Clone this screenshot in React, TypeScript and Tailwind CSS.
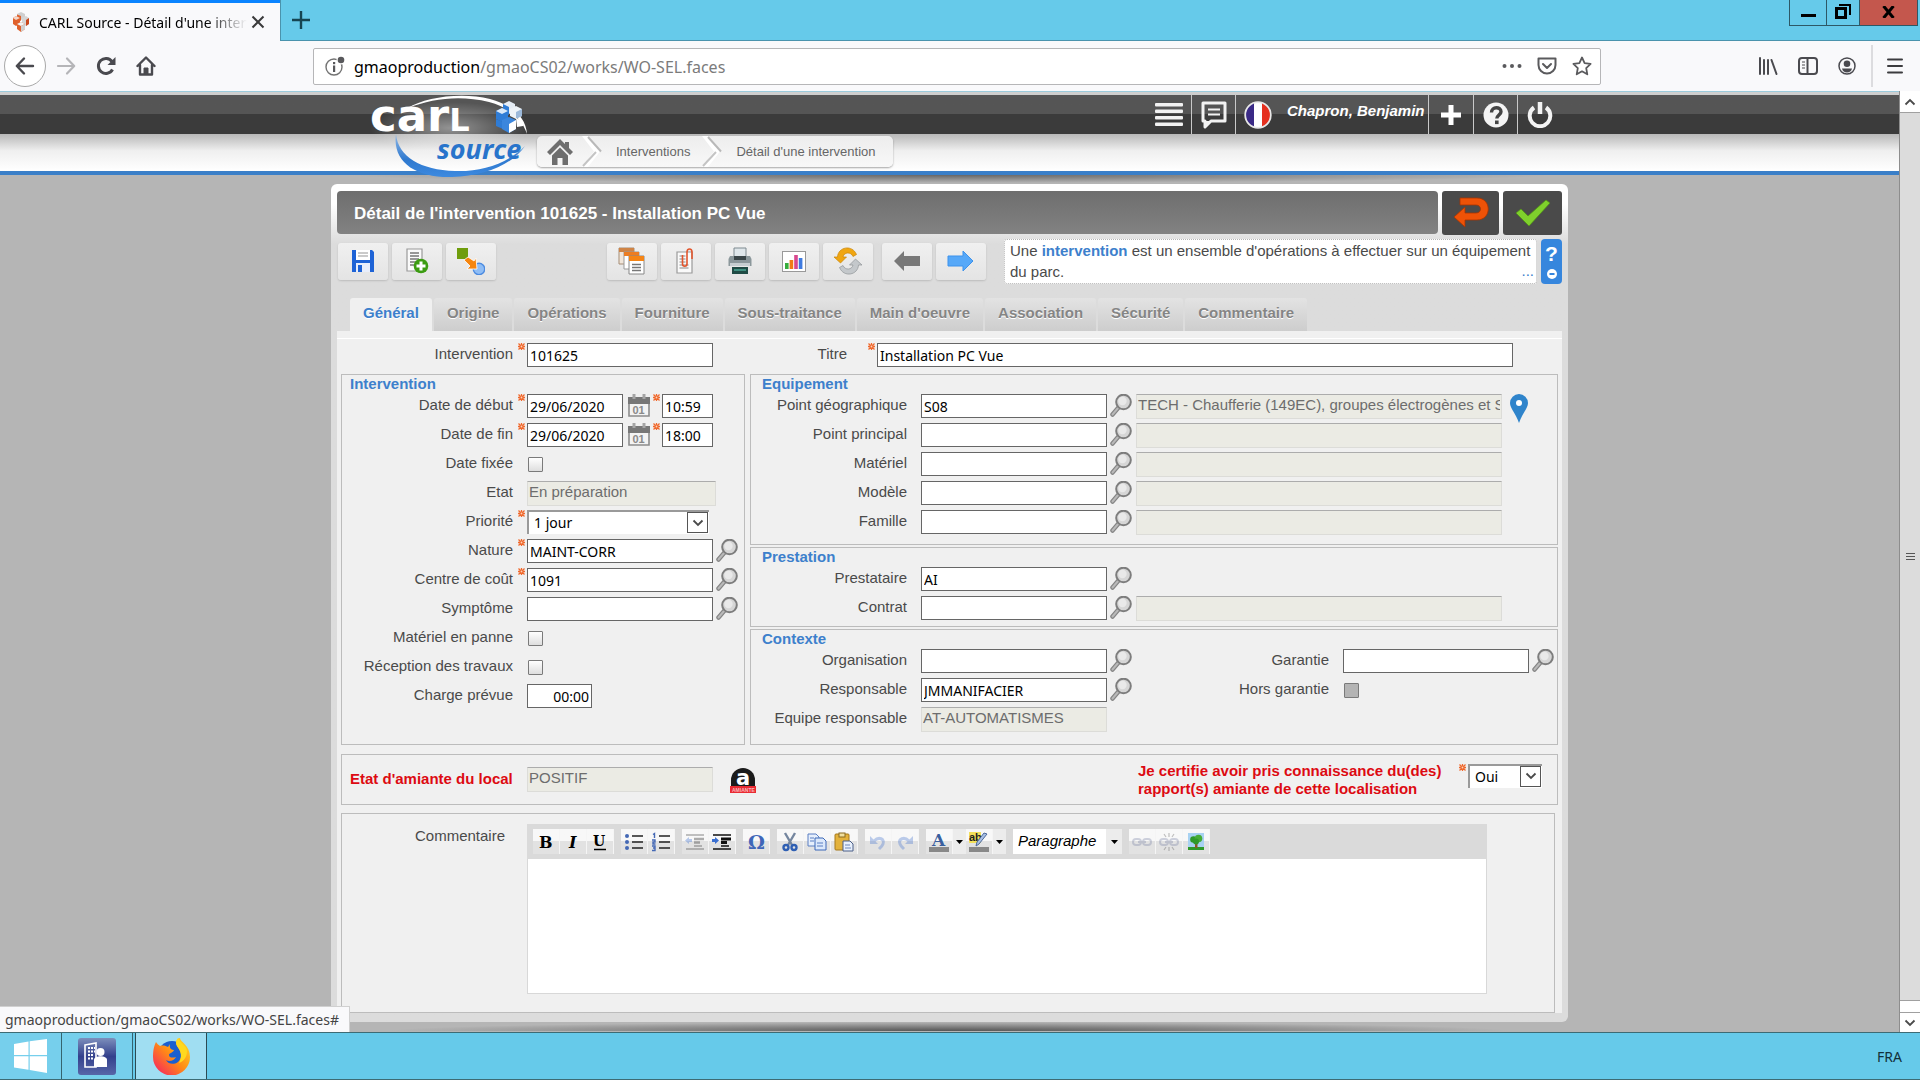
import React, { useState } from 'react';
import clsx from 'clsx';

type IconProps = { className?: string };

/* ---------- browser icons ---------- */

const FaviconIcon = () => (
  <svg className="h-5 w-[18px]" viewBox="0 0 18 20">
    <path d="M9 0l4 2v4l-4 2-4-2V2z" fill="#cfcfcf" />
    <path d="M9 4v5l-4-2V2.500z" fill="#e0612c" />
    <path d="M4 4l4 2v6l-4 2-3-2V6z" fill="#e0612c" />
    <path d="M4 4l4 2-4 2-3-2z" fill="#f4d8cb" />
    <path d="M14 4l3 2v6l-3 2-4-2V6z" fill="#d5d5d5" />
    <path d="M14 8l3-2v6l-3 2z" fill="#c9471c" />
    <path d="M9 10l4 2v5l-4 3-4-3v-5z" fill="#e0612c" />
    <path d="M9 10l4 2-4 2-4-2z" fill="#f4f4f4" />
    <path d="M9 14l4-2v5l-4 3z" fill="#d0d0d0" />
  </svg>
);

const ArrowLeftIcon = () => (
  <svg className="h-5 w-5" viewBox="0 0 20 20" fill="none" stroke="#4a4a4f" strokeWidth="2.4" strokeLinecap="round" strokeLinejoin="round">
    <path d="M18 10H2M9 2.500L1.800 10 9 17.500" />
  </svg>
);

const ArrowRightIcon = () => (
  <svg className="h-5 w-5" viewBox="0 0 20 20" fill="none" stroke="#b5b5b8" strokeWidth="2.200" strokeLinecap="round" strokeLinejoin="round">
    <path d="M2 10h16M11 2.500L18.200 10 11 17.500" />
  </svg>
);

const ReloadIcon = () => (
  <svg className="h-5 w-5" viewBox="0 0 20 20" fill="none" stroke="#4a4a4f" strokeWidth="3">
    <path d="M16.500 13.500A7.500 7.500 0 1 1 16 5.500" />
    <path d="M19.500 1v8h-8z" fill="#4a4a4f" stroke="none" />
  </svg>
);

const BrowserHomeIcon = () => (
  <svg className="h-5 w-5" viewBox="0 0 20 20" fill="none" stroke="#4a4a4f" strokeWidth="2.4" strokeLinejoin="round" strokeLinecap="round">
    <path d="M1.500 10L10 1.500l8.500 8.500M4 9v9.500h12V9" />
    <path d="M8 18v-6h4v6z" fill="#4a4a4f" strokeWidth="1" />
  </svg>
);

const InfoIcon = () => (
  <svg className="h-5 w-5" viewBox="0 0 20 20">
    <circle cx="9" cy="11" r="8" fill="none" stroke="#737373" strokeWidth="1.400" />
    <circle cx="16" cy="4" r="4.500" fill="#fff" />
    <circle cx="16" cy="4" r="3.300" fill="#58585b" />
    <rect x="8" y="9.500" width="2.200" height="6.500" fill="#58585b" />
    <rect x="8" y="6" width="2.200" height="2.200" fill="#58585b" />
  </svg>
);

const PocketIcon = () => (
  <svg className="h-5 w-5" viewBox="0 0 20 20" fill="none" stroke="#5a5a5d" strokeWidth="2" strokeLinecap="round" strokeLinejoin="round">
    <path d="M1.500 2.500h17v6.500a8.500 8.500 0 0 1-17 0z" />
    <path d="M6 8l4 4 4-4" />
  </svg>
);

const StarIcon = () => (
  <svg className="h-[22px] w-5" viewBox="0 0 20 20" fill="none" stroke="#5a5a5d" strokeWidth="1.800" strokeLinejoin="round">
    <path d="M10 1.500l2.600 5.600 6 .8-4.400 4.200 1.100 6.200-5.300-3-5.300 3 1.100-6.200L1.400 7.900l6-.8z" />
  </svg>
);

const LibraryIcon = () => (
  <svg className="h-[18px] w-5" viewBox="0 0 20 18" stroke="#4a4a4f" strokeWidth="2" strokeLinecap="round">
    <path d="M2 1v16M6 3v14M10 3v14M13.500 3l5 14" />
  </svg>
);

const SidebarIcon = () => (
  <svg className="h-[18px] w-5" viewBox="0 0 20 18" fill="none" stroke="#4a4a4f" strokeWidth="2">
    <rect x="1" y="1" width="18" height="16" rx="3" />
    <path d="M9.500 1v16" />
    <path d="M4 5h3M4 8h3M4 11h3" strokeWidth="1.200" />
  </svg>
);

const AccountIcon = () => (
  <svg className="h-[18px] w-[18px]" viewBox="0 0 18 18">
    <circle cx="9" cy="9" r="8" fill="none" stroke="#4a4a4f" strokeWidth="1.500" />
    <circle cx="9" cy="6.800" r="3.300" fill="#4a4a4f" />
    <path d="M4 11.500h10c-.5 2.500-2.500 4-5 4s-4.500-1.500-5-4z" fill="#4a4a4f" />
  </svg>
);

/* ---------- application header icons ---------- */

const CarlLogo = () => (
  <svg className="h-[90px] w-[164px]" viewBox="368 91 164 90">
    <defs>
      <linearGradient id="swoosh" x1="0" y1="0" x2="0" y2="1">
        <stop offset="0" stopColor="#8fb8e6" />
        <stop offset="0.6" stopColor="#2f79cf" />
        <stop offset="1" stopColor="#3d8ae0" />
      </linearGradient>
      <radialGradient id="glow">
        <stop offset="0" stopColor="#fff" stopOpacity="0.45" />
        <stop offset="1" stopColor="#fff" stopOpacity="0" />
      </radialGradient>
    </defs>
    <ellipse cx="450" cy="128" rx="80" ry="26" fill="url(#glow)" />
    <path d="M408 108C425 97 462 92 490 99c22 6 36 18 37 35-5-15-18-27-38-32-28-7-56-4-81 6z" fill="#fff" />
    <path d="M396 134c-4 28 20 44 56 43 32-1 60-12 73-31-18 18-44 26-70 25-34-1-57-14-59-37z" fill="url(#swoosh)" />
    <text x="370" y="131" fill="#fff" fontFamily="DejaVu Sans" fontWeight="700" fontSize="45">
      car<tspan fontSize="32">L</tspan>
    </text>
    <text x="437" y="159" fill="#2874cb" fontFamily="Open Sans" fontWeight="700" fontStyle="italic" fontSize="27">source</text>
    <path d="M509 101l6 3v7l-6 3-6-3v-7z" fill="#e6edf5" />
    <path d="M509 107v8l-6-3v-8z" fill="#2f7cd6" />
    <path d="M502 108l6 3v8l-6 3-6-3v-8z" fill="#2f7cd6" />
    <path d="M502 108l6 3-6 3-6-3z" fill="#d9e8f8" />
    <path d="M516 106l6 3v7l-6 3-6-3v-7z" fill="#eef3f8" />
    <path d="M516 112l6-3v7l-6 3z" fill="#9cb9da" />
    <path d="M496 119l7 3v7l-7-3z" fill="#2f7cd6" />
    <path d="M509 117l7 3v9l-7 4-7-4v-9z" fill="#3b86dd" />
    <path d="M509 124l7-4v9l-7 4z" fill="#fff" />
    <path d="M516 118l7 3v5l-6 1z" fill="#fff" />
  </svg>
);

const MenuLinesIcon = () => (
  <svg className="h-6 w-7" viewBox="0 0 28 24" fill="#f2f2f2">
    <rect width="28" height="3.500" y="0" rx="1" />
    <rect width="28" height="3.500" y="6.500" rx="1" />
    <rect width="28" height="3.500" y="13" rx="1" />
    <rect width="28" height="3.500" y="19.500" rx="1" />
  </svg>
);

const ChatIcon = () => (
  <svg className="h-7 w-7" viewBox="0 0 28 28">
    <path d="M3 2h22v18H11l-6 6v-6H3z" fill="none" stroke="#f2f2f2" strokeWidth="3" strokeLinejoin="round" />
    <path d="M4 20h8l-7 7z" fill="#f2f2f2" />
    <path d="M8 8.500h12M8 13.500h12" stroke="#f2f2f2" strokeWidth="2.200" />
  </svg>
);

const FlagIcon = () => (
  <svg className="h-7 w-7" viewBox="0 0 28 28">
    <clipPath id="flag"><circle cx="14" cy="14" r="12.500" /></clipPath>
    <g clipPath="url(#flag)">
      <rect width="10" height="28" fill="#3a2a86" />
      <rect x="10" width="8" height="28" fill="#fff" />
      <rect x="18" width="10" height="28" fill="#e5301f" />
    </g>
    <circle cx="14" cy="14" r="12.800" fill="none" stroke="#e8e8e8" strokeWidth="1.800" />
  </svg>
);

const PlusIcon = () => (
  <svg className="h-5 w-5" viewBox="0 0 20 20" fill="#fff">
    <path d="M7.500 0h5v7.500H20v5h-7.500V20h-5v-7.500H0v-5h7.500z" />
  </svg>
);

const QuestionIcon = () => (
  <svg className="h-[26px] w-[26px]" viewBox="0 0 26 26">
    <circle cx="13" cy="13" r="12.500" fill="#f4f4f4" />
    <path d="M8.500 10.500c0-6.500 9.500-6 9.500-.8 0 3-4.200 3.600-4.200 6.800" fill="none" stroke="#444" strokeWidth="3.400" />
    <rect x="12" y="18.500" width="3.600" height="3.600" fill="#444" />
  </svg>
);

const PowerIcon = () => (
  <svg className="h-[26px] w-[26px]" viewBox="0 0 26 26" fill="none" stroke="#f4f4f4" strokeWidth="4">
    <path d="M7 5.500a10.300 10.300 0 1 0 12 0" />
    <path d="M13 0v12" strokeWidth="4.500" />
  </svg>
);

const CrumbHomeIcon = () => (
  <svg className="h-[26px] w-[26px]" viewBox="0 0 26 26" fill="#6e6e6e">
    <path d="M13 0L0 13l3 3L13 6l10 10 3-3-4-4V3h-4v2z" />
    <path d="M13 8.500L5 16.500V26h5.500v-7h5v7H21v-9.500z" />
  </svg>
);

const CrumbSeparator = () => (
  <svg className="h-[31px] w-6 shrink-0" viewBox="0 0 24 31" fill="none">
    <path d="M1 0h6l12 15.500L7 31H1l12-15.500z" fill="#fff" />
    <path d="M7 1l13 14.500" stroke="#b9b9b9" strokeWidth="2" />
    <path d="M15 16L2 30" stroke="#c4c4c4" strokeWidth="2" />
  </svg>
);

/* ---------- toolbar icons ---------- */

const SaveIcon = () => (
  <svg className="h-6 w-6" viewBox="0 0 24 24">
    <path d="M1 1h20l2 2v20H1z" fill="#1e63d6" />
    <rect x="5" y="1" width="14" height="10" fill="#fff" />
    <path d="M7 4h10M7 7h10" stroke="#b9b9b9" strokeWidth="1.400" />
    <rect x="5" y="14" width="14" height="9" fill="#e8eefb" />
    <rect x="7" y="16" width="4" height="7" fill="#1e63d6" />
  </svg>
);

const AddDocIcon = () => (
  <svg className="h-[26px] w-6" viewBox="0 0 24 26">
    <path d="M2 1h15v22H2z" fill="#fafafa" stroke="#9a9a9a" strokeWidth="1.200" />
    <path d="M5 5h9M5 8h9M5 11h9M5 14h7M5 17h6" stroke="#777" strokeWidth="1.300" />
    <circle cx="16" cy="18" r="7.300" fill="#3c9c12" />
    <path d="M16 13.500v9M11.500 18h9" stroke="#fff" strokeWidth="3" />
  </svg>
);

const WorkflowIcon = () => (
  <svg className="h-7 w-7" viewBox="0 0 28 28">
    <rect x="0" y="1" width="11" height="11" fill="#6f9d0c" />
    <circle cx="22" cy="22" r="5.700" fill="#8fbdf5" stroke="#4c8be0" strokeWidth="1.400" />
    <path d="M7 13l4-3 6 4 2-3 1 11H10l3-3z" fill="#f5850f" stroke="#fff" strokeWidth="0.800" />
  </svg>
);

const CopiesIcon = () => (
  <svg className="h-7 w-7" viewBox="0 0 28 28">
    <path d="M1 1h15v16H1z" fill="#f1e6da" stroke="#a58d76" />
    <path d="M1 1h15v4H1z" fill="#cf8446" />
    <path d="M6 5h15v17H6z" fill="#fff" stroke="#999" />
    <path d="M6 5h15v4H6z" fill="#ec7d22" />
    <path d="M11 9h15v18H11z" fill="#fff" stroke="#888" />
    <path d="M11 9h15v5H11z" fill="#f58414" />
    <path d="M14 17.500h9M14 20.500h9M14 23.500h9" stroke="#777" strokeWidth="1.400" />
  </svg>
);

const AttachIcon = () => (
  <svg className="h-[26px] w-[22px]" viewBox="0 0 22 26">
    <path d="M2 4h15v21H2z" fill="#fafafa" stroke="#9a9a9a" strokeWidth="1.200" />
    <path d="M4.500 8h6M4.500 11h6M4.500 14h6M4.500 17h9M4.500 20h9" stroke="#888" strokeWidth="1.200" />
    <path d="M10.500 7v9c0 3 4.500 3 4.500 0V4c0-4 5-4 5 0v7" fill="none" stroke="#e2562e" strokeWidth="1.600" transform="translate(-3 0)" />
  </svg>
);

const PrintIcon = () => (
  <svg className="h-7 w-6" viewBox="0 0 24 28">
    <path d="M6 1h12v10H6z" fill="#dfe6ea" stroke="#7f8a90" />
    <path d="M2 9h20l1.500 3v7H.5v-7z" fill="#8b979b" />
    <path d="M6 9h12v4H6z" fill="#3a4548" />
    <path d="M2 16h20v3H2z" fill="#c6ced1" />
    <path d="M4 20h16v7H4z" fill="#1f4b45" />
    <path d="M6 22h12v2H6z" fill="#3f8f80" />
  </svg>
);

const ChartIcon = () => (
  <svg className="h-6 w-6" viewBox="0 0 24 24">
    <rect x="0.500" y="2.500" width="23" height="20" fill="#fff" stroke="#999" />
    <rect x="3" y="14" width="3.600" height="6" fill="#37ad3c" />
    <rect x="7.600" y="11" width="3.600" height="9" fill="#f07c16" />
    <rect x="12.200" y="6" width="3.600" height="14" fill="#d8488e" />
    <rect x="16.800" y="9" width="3.600" height="11" fill="#3f7be0" />
  </svg>
);

const RefreshIcon = () => (
  <svg className="h-7 w-7" viewBox="0 0 28 28">
    <path d="M0 10l6.500 6 6-6H9c1-5 8-5.500 10-.5l3.500-2C18-3 4 0 3.500 10z" fill="#f0a611" stroke="#c98508" strokeWidth="0.700" />
    <path d="M28 18l-6.500-6-6 6H19c-1 5-8 5.500-10 .5l-3.500 2C10 31 24 28 24.500 18z" fill="#c4c8cb" stroke="#8f9497" strokeWidth="0.700" />
  </svg>
);

const PrevIcon = () => (
  <svg className="h-[22px] w-7" viewBox="0 0 28 22">
    <path d="M11 1v5h16v10H11v5L1 11z" fill="#787878" />
  </svg>
);

const NextIcon = () => (
  <svg className="h-[22px] w-7" viewBox="0 0 28 22">
    <path d="M16 1v5H1v10h15v5l10-10z" fill="#56a8f8" stroke="#3d92ec" strokeWidth="1" />
  </svg>
);

const BackIcon = () => (
  <svg className="h-8 w-9" viewBox="0 0 36 32">
    <path d="M7 1h17c15 0 15 22 0 22H12v7L1 20l11-10v6h11c6 0 6-8 0-8H7z" fill="#ee5207" stroke="#a83400" strokeWidth="0.800" />
  </svg>
);

const ValidateIcon = () => (
  <svg className="h-7 w-9" viewBox="0 0 36 28">
    <path d="M1 14l5-4 7 7L31 1l4 3-21 23z" fill="#7fd02c" stroke="#4f9412" strokeWidth="0.700" />
  </svg>
);

/* ---------- field icons ---------- */

const Required = () => (
  <svg className="h-[7px] w-[7px]" viewBox="0 0 7 7">
    <path d="M3.500 0v7M0 3.500h7M.5.500l6 6M6.500.500l-6 6" stroke="#f0682c" strokeWidth="1.300" />
    <circle cx="3.500" cy="3.500" r="0.900" fill="#fbd3bd" />
  </svg>
);

const MagnifierIcon = () => (
  <svg className="h-6 w-[22px]" viewBox="0 0 22 24">
    <path d="M8.500 13.500L2.500 20.500" stroke="#858585" strokeWidth="4.500" strokeLinecap="round" />
    <path d="M8.500 13.500L2.500 20.500" stroke="#b9b9b9" strokeWidth="2" strokeLinecap="round" />
    <circle cx="13.500" cy="8" r="7.300" fill="#d6d6d6" stroke="#7d7d7d" strokeWidth="2" />
    <circle cx="12.500" cy="7" r="4.200" fill="#e9e9e9" />
  </svg>
);

const CalendarIcon = () => (
  <svg className="h-6 w-[22px]" viewBox="0 0 22 24">
    <path d="M1 4h20v18H1z" fill="#f3f3f3" stroke="#8c8c8c" strokeWidth="1.600" />
    <path d="M0 3h22v7H0z" fill="#777" />
    <rect x="4.500" y="0" width="3" height="5" fill="#a5a5a5" />
    <rect x="14.500" y="0" width="3" height="5" fill="#a5a5a5" />
    <text x="4.500" y="20" fontFamily="Liberation Sans" fontWeight="700" fontSize="11" fill="#8a8a8a">01</text>
  </svg>
);

const PinIcon = () => (
  <svg className="h-[29px] w-[18px]" viewBox="0 0 18 29">
    <path d="M9 0a9 9 0 0 1 9 9c0 5-6 11-9 20C6 20 0 14 0 9a9 9 0 0 1 9-9z" fill="#2f84cb" />
    <circle cx="9" cy="9" r="3" fill="#fff" />
  </svg>
);

const AsbestosIcon = () => (
  <svg className="h-[26px] w-[26px]" viewBox="0 0 26 26">
    <path d="M1 19v-6a12 12 0 0 1 24 0v6z" fill="#1b1b1b" />
    <text x="6" y="18" fontFamily="DejaVu Sans" fontWeight="700" fontSize="21" fill="#fff">a</text>
    <rect x="0" y="19" width="26" height="7" fill="#ea2a32" />
    <text x="2" y="25" fontFamily="Liberation Sans" fontWeight="700" fontSize="5" fill="#f9b7b9">AMIANTE</text>
  </svg>
);

const Chevron = ({ className }: IconProps) => (
  <svg className={clsx('h-2 w-3', className)} viewBox="0 0 12 8" fill="none" stroke="#4a4a4a" strokeWidth="1.800">
    <path d="M1.500 1.500L6 6l4.500-4.500" />
  </svg>
);

/* ---------- form pieces ---------- */

type FieldProps = {
  id: string;
  label: string;
  labelClass?: string;
  required?: boolean;
  children?: React.ReactNode;
};

const Field = ({ id, label, labelClass = 'w-[171px]', required, children }: FieldProps) => (
  <div className="flex h-[29px] items-start">
    <label htmlFor={id} className={clsx('h-6 shrink-0 text-right text-[15px] leading-[22px] text-[#4a4a4a]', labelClass)}>
      {label}
    </label>
    <span className="flex w-[14px] shrink-0 pl-[5px]">{required && <Required />}</span>
    {children}
  </div>
);

type TextInputProps = {
  id: string;
  value?: string;
  className?: string;
  label?: string;
};

const TextInput = ({ id, value = '', className = 'w-[186px]', label }: TextInputProps) => {
  const [text, setText] = useState(value);
  return (
    <input
      id={id}
      type="text"
      aria-label={label}
      value={text}
      onChange={e => setText(e.target.value)}
      className={clsx("h-6 border border-[#666] bg-white px-[2px] font-['Noto_Sans',sans-serif] text-sm leading-5 text-black outline-none", className)}
    />
  );
};

const ReadOnly = ({ id, value = '', className = 'w-[186px]', label }: TextInputProps) => (
  <input
    id={id}
    type="text"
    readOnly
    aria-label={label}
    value={value}
    className={clsx('h-[25px] min-w-0 border border-[#dcdcd8] border-t-[#acacac] bg-[#ebebe4] px-px pb-[5px] text-[15px] text-[#6d6d6d] outline-none', className)}
  />
);

const CheckBox = ({ id, gray }: { id: string; gray?: boolean }) => (
  <input
    id={id}
    type="checkbox"
    disabled={gray}
    className={clsx(
      'mt-[5px] ml-px h-[15px] w-[15px] appearance-none rounded-[1px] border border-[#7a7a7a]',
      gray ? 'bg-[#b4b4b4]' : 'bg-linear-to-b from-white to-[#dedede]'
    )}
  />
);

const LookupButton = ({ name }: { name: string }) => (
  <button type="button" aria-label={`Rechercher ${name}`} className="ml-[3px] shrink-0">
    <MagnifierIcon />
  </button>
);

const Lookup = ({ id, value, name }: { id: string; value?: string; name: string }) => (
  <>
    <TextInput id={id} value={value} />
    <LookupButton name={name} />
  </>
);

const SelectBox = ({ id, className, options }: { id: string; className: string; options: string[] }) => (
  <span className={clsx('relative h-6', className)}>
    <select
      id={id}
      className="h-6 w-full appearance-none border-t-2 border-l-2 border-[#9a9a9a] bg-white pl-[5px] font-['Noto_Sans',sans-serif] text-sm leading-5 text-black outline-none"
    >
      {options.map(o => <option key={o}>{o}</option>)}
    </select>
    <span className="pointer-events-none absolute top-[2px] right-px flex h-[21px] w-[21px] items-center justify-center border border-[#555] bg-white">
      <Chevron />
    </span>
  </span>
);

const DateField = ({ id, label, date, time }: { id: string; label: string; date: string; time: string }) => (
  <Field id={id} label={label} required>
    <TextInput id={id} value={date} className="w-24" />
    <button type="button" aria-label="Calendrier" className="ml-[5px]"><CalendarIcon /></button>
    <span className="flex w-3 pl-[3px]"><Required /></span>
    <TextInput id={`${id}-heure`} value={time} label="Heure" className="w-[51px]" />
  </Field>
);

const Group = ({ title, titleClass, className, children }: { title: string; titleClass: string; className?: string; children: React.ReactNode }) => (
  <section className={clsx('border border-[#bcbcbc]', className)}>
    <h2 className={clsx('h-[19px] text-[15px] leading-[17px] font-bold text-[#3d80cc]', titleClass)}>{title}</h2>
    {children}
  </section>
);

const ToolButton = ({ name, children }: { name: string; children: React.ReactNode }) => (
  <button
    type="button"
    aria-label={name}
    className="flex h-[37px] w-[50px] items-center justify-center rounded-[3px] bg-linear-to-b from-[#f0f0f0] to-[#e4e4e4] shadow-[0_1px_2px_rgba(0,0,0,0.15)]"
  >
    {children}
  </button>
);

/* ---------- rich text editor ---------- */

const EditorButton = ({ name, faded, children }: { name: string; faded?: boolean; children: React.ReactNode }) => (
  <button
    type="button"
    aria-label={name}
    className="flex h-[25px] w-[27px] items-center justify-center border-r border-[#f5f5f5] bg-linear-to-b from-[#f8f8f8] from-50% to-[#e2e2e2] to-50%"
  >
    <svg className={clsx('h-5 w-5 overflow-visible', faded && 'opacity-35')} viewBox="0 0 20 20" fill="none">{children}</svg>
  </button>
);

const DropArrow = ({ name, className = 'w-[13px]' }: { name: string; className?: string }) => (
  <button type="button" aria-label={name} className={clsx('flex h-[25px] items-center justify-center bg-[#ececec]', className)}>
    <svg className="h-1 w-[7px]" viewBox="0 0 7 4"><path d="M0 0h7L3.500 4z" fill="#000" /></svg>
  </button>
);

const letter = { fontFamily: 'DejaVu Serif', fontWeight: 700 };

const Chain = () => (
  <g stroke="#7d86a8" strokeWidth="2">
    <rect x="1" y="7" width="8" height="6" rx="3" />
    <rect x="11" y="7" width="8" height="6" rx="3" />
    <path d="M6 10h8" />
  </g>
);

const EditorToolbar = () => (
  <div className="flex h-[35px] items-center gap-[7px] bg-[#dadada] px-[6px]">
    <div className="flex">
      <EditorButton name="Gras"><text x="3" y="16" fontSize="16" fill="#000" {...letter}>B</text></EditorButton>
      <EditorButton name="Italique"><text x="6" y="16" fontSize="16" fill="#000" fontStyle="italic" {...letter}>I</text></EditorButton>
      <EditorButton name="Souligné">
        <text x="3" y="14" fontSize="14" fill="#000" {...letter}>U</text>
        <path d="M4 17.500h12" stroke="#000" strokeWidth="1.500" />
      </EditorButton>
    </div>
    <div className="flex">
      <EditorButton name="Liste à puces">
        <path d="M8 4h11M8 10h11M8 16h11" stroke="#222" strokeWidth="1.500" />
        <g fill="#4468b5"><circle cx="3" cy="4" r="2" /><circle cx="3" cy="10" r="2" /><circle cx="3" cy="16" r="2" /></g>
      </EditorButton>
      <EditorButton name="Liste numérotée">
        <path d="M8 4h11M8 10h11M8 16h11" stroke="#222" strokeWidth="1.500" />
        <path d="M2 2.500l1.500-1v4.500M1 8h3v2H2v2h2.500M1 14h3v2H2h2v2.500H1" stroke="#4468b5" strokeWidth="1.400" />
      </EditorButton>
    </div>
    <div className="flex">
      <EditorButton name="Diminuer le retrait" faded>
        <path d="M1 3h18M1 17h18M9 14h8" stroke="#222" strokeWidth="1.300" />
        <path d="M9 7h10M9 10.500h6" stroke="#222" strokeWidth="2.500" />
        <path d="M0 8.500L4 5v2h3v3H4v2z" fill="#3a6fd0" />
      </EditorButton>
      <EditorButton name="Augmenter le retrait">
        <path d="M1 3h18M1 17h18M9 14h8" stroke="#111" strokeWidth="1.500" />
        <path d="M9 7h10M9 10.500h6" stroke="#111" strokeWidth="2.800" />
        <path d="M7 8.500L3 5v2H0v3h3v2z" fill="#3a6fd0" />
      </EditorButton>
    </div>
    <EditorButton name="Caractère spécial"><text x="2" y="17" fontSize="19" fill="#3f66b8" {...letter}>Ω</text></EditorButton>
    <div className="flex">
      <EditorButton name="Couper">
        <path d="M5 1l7 12M15 1L8 13" stroke="#75869f" strokeWidth="2.400" />
        <circle cx="6" cy="15.500" r="2.500" stroke="#2f5fb3" strokeWidth="2.400" />
        <circle cx="14" cy="15.500" r="2.500" stroke="#2f5fb3" strokeWidth="2.400" />
      </EditorButton>
      <EditorButton name="Copier">
        <path d="M1 2h8l3 3v9H1z" fill="#e6effc" stroke="#5b7fc2" />
        <path d="M8 6h8l3 3v9H8z" fill="#dbe8fb" stroke="#3d68b8" />
        <path d="M3 6h4M3 9h4M10 11h6M10 14h6" stroke="#5b7fc2" />
      </EditorButton>
      <EditorButton name="Coller">
        <rect x="1" y="2" width="14" height="16" rx="1" fill="#e3b23c" stroke="#a6781a" />
        <rect x="5" y="1" width="6" height="4" fill="#f0dfa0" stroke="#8a6a20" />
        <path d="M9 9h7l3 3v7H9z" fill="#e8f0fc" stroke="#4b5f88" />
        <path d="M11 13h5M11 16h6" stroke="#6d86b8" />
      </EditorButton>
    </div>
    <div className="flex">
      <EditorButton name="Annuler" faded>
        <path d="M6 9c5-5 11-2 9 3-.7 2-3 4-4 5" stroke="#4a77cf" strokeWidth="3" />
        <path d="M2 4v8h8z" fill="#4a77cf" />
      </EditorButton>
      <EditorButton name="Rétablir" faded>
        <path d="M14 9C9 4 3 7 5 12c.7 2 3 4 4 5" stroke="#4a77cf" strokeWidth="3" />
        <path d="M18 4v8h-8z" fill="#4a77cf" />
      </EditorButton>
    </div>
    <div className="flex">
      <EditorButton name="Couleur du texte">
        <text x="3" y="14" fontSize="17" fill="#3a5f9e" {...letter}>A</text>
        <rect x="0" y="15" width="20" height="5" fill="#888" />
      </EditorButton>
      <DropArrow name="Choisir la couleur" />
      <EditorButton name="Surlignage">
        <rect x="0" y="0" width="12" height="11" fill="#f2e05a" />
        <text x="0" y="9" fontSize="11" fontFamily="Liberation Sans" fontWeight="700" fill="#222">ab</text>
        <path d="M18 2l-8 10-3 2 1-4 7-9z" fill="#a9c0e4" stroke="#4c6899" />
        <rect x="0" y="15" width="20" height="5" fill="#888" />
      </EditorButton>
      <DropArrow name="Choisir le surlignage" />
    </div>
    <div className="relative flex">
      <select aria-label="Format" className="h-[25px] w-[93px] appearance-none bg-white pl-[5px] text-[15px] text-black italic outline-none">
        <option>Paragraphe</option>
      </select>
      <DropArrow name="Choisir le format" className="w-4" />
    </div>
    <div className="flex">
      <EditorButton name="Lien" faded><Chain /></EditorButton>
      <EditorButton name="Supprimer le lien" faded>
        <Chain />
        <path d="M10 1v4M5 2l2 3M15 2l-2 3M10 19v-4M5 18l2-3M15 18l-2-3" stroke="#555" strokeWidth="1.200" />
      </EditorButton>
      <EditorButton name="Image">
        <rect x="2" y="1" width="16" height="17" fill="#a8d2f2" />
        <rect x="2" y="15" width="16" height="3" fill="#2f9a2a" />
        <path d="M9 10h2.500v6H9z" fill="#8a5a26" />
        <circle cx="7.500" cy="7.500" r="3.300" fill="#2f9a2a" />
        <circle cx="12.500" cy="6.500" r="3.800" fill="#46ad35" />
        <circle cx="10" cy="9.500" r="3" fill="#2f9a2a" />
      </EditorButton>
    </div>
  </div>
);

/* ---------- page parts ---------- */

const BrowserChrome = () => (
  <header className="font-['Noto_Sans',sans-serif]">
    <div className="flex h-[41px] items-start bg-[#66caea]">
      <div className="flex h-[41px] w-[280px] items-center border-t-[3px] border-[#0a84ff] bg-[#f9f9fb] pl-3">
        <FaviconIcon />
        <span className="ml-[9px] w-[208px] overflow-hidden bg-linear-to-r from-black from-80% to-transparent bg-clip-text text-[14px] whitespace-nowrap text-transparent">
          CARL Source - Détail d'une intervention
        </span>
        <button type="button" aria-label="Fermer l'onglet" className="ml-1">
          <svg className="h-[14px] w-[14px]" viewBox="0 0 14 14" stroke="#3a3a3a" strokeWidth="2"><path d="M1.500 1.500l11 11M12.500 1.500l-11 11" /></svg>
        </button>
      </div>
      <div className="flex h-[41px] flex-1 items-start justify-between border-b border-l border-[#4a93ad]">
        <button type="button" aria-label="Nouvel onglet" className="mt-[11px] ml-[11px]">
          <svg className="h-[18px] w-[18px]" viewBox="0 0 18 18" stroke="#164552" strokeWidth="2.400"><path d="M9 0v18M0 9h18" /></svg>
        </button>
        <div className="mr-[2px] flex h-[26px] border-b border-l border-[#2d5866]">
          <button type="button" aria-label="Réduire" className="flex w-9 justify-center pt-[14px]">
            <span className="h-[3px] w-[15px] bg-black" />
          </button>
          <button type="button" aria-label="Restaurer" className="flex w-[33px] items-start justify-center border-l border-[#2d5866] pt-1">
            <svg className="h-[15px] w-4" viewBox="0 0 16 15" fill="none" stroke="#000"><path d="M1.500 4.500h9v9h-9z" strokeWidth="3" /><path d="M4 1h11v10" strokeWidth="2" /></svg>
          </button>
          <button type="button" aria-label="Fermer" className="flex w-[59px] items-start justify-center border-x border-[#2d5866] bg-[#c4574d] pt-[6px]">
            <svg className="h-3 w-[13px]" viewBox="0 0 13 12" stroke="#000" strokeWidth="3"><path d="M1.500 0l10 12M11.500 0l-10 12" /></svg>
          </button>
        </div>
      </div>
    </div>
    <div className="flex h-[50px] items-center bg-[#f9f9fb] pl-1">
      <button type="button" aria-label="Précédent" className="flex h-[42px] w-[42px] items-center justify-center rounded-full border border-[#a9a9a9] bg-white">
        <ArrowLeftIcon />
      </button>
      <button type="button" aria-label="Suivant" className="ml-[10px]"><ArrowRightIcon /></button>
      <button type="button" aria-label="Actualiser" className="ml-5"><ReloadIcon /></button>
      <button type="button" aria-label="Accueil" className="ml-5"><BrowserHomeIcon /></button>
      <div className="ml-[157px] flex h-[37px] flex-1 items-center rounded-[2px] border border-[#b6b6b8] bg-white pr-2 pl-[11px]">
        <InfoIcon />
        <a href="#" className="ml-[9px] flex-1 pt-[2px] text-[16px] text-[#7b7b7b]">
          <span className="text-black">gmaoproduction</span>/gmaoCS02/works/WO-SEL.faces
        </a>
        <button type="button" aria-label="Actions" className="mr-[15px]">
          <svg className="h-1 w-5" viewBox="0 0 20 4" fill="#5a5a5d"><circle cx="2.500" cy="2" r="2" /><circle cx="10" cy="2" r="2" /><circle cx="17.500" cy="2" r="2" /></svg>
        </button>
        <button type="button" aria-label="Pocket" className="mr-[15px]"><PocketIcon /></button>
        <button type="button" aria-label="Marque-page"><StarIcon /></button>
      </div>
      <div className="ml-[157px] flex items-center gap-5">
        <button type="button" aria-label="Bibliothèque"><LibraryIcon /></button>
        <button type="button" aria-label="Panneau latéral"><SidebarIcon /></button>
        <button type="button" aria-label="Compte"><AccountIcon /></button>
      </div>
      <button type="button" aria-label="Menu" className="ml-[15px] flex h-[42px] items-center border-l-2 border-[#dcdcdf] pr-[17px] pl-[14px]">
        <svg className="h-4 w-4" viewBox="0 0 16 16" stroke="#3c3c3f" strokeWidth="2" strokeLinecap="round"><path d="M1 1.500h14M1 8h14M1 14.500h14" /></svg>
      </button>
    </div>
  </header>
);

const cell = 'flex h-[39px] items-center justify-center border-l border-[#c9c9c9]';

const AppHeader = () => (
  <div className="relative">
    <div className="h-1 border-t border-[#9bcbdc] bg-[#cfcfcf]" />
    <div className="bg-linear-to-b from-[#555] from-50% to-[#3b3b3b] to-50%">
      <div className="mx-auto flex h-[39px] max-w-[1237px] items-center justify-end pr-[6px] text-white">
        <button type="button" aria-label="Menu principal" className="mr-2 flex"><MenuLinesIcon /></button>
        <button type="button" aria-label="Messages" className={clsx(cell, 'w-11')}><ChatIcon /></button>
        <button type="button" aria-label="Langue" className={clsx(cell, 'mr-2 w-11')}><FlagIcon /></button>
        <span className="w-[141px] pb-2 text-[15px] leading-5 font-bold whitespace-nowrap italic">Chapron, Benjamin</span>
        <button type="button" aria-label="Ajouter" className={clsx(cell, 'w-[45px]')}><PlusIcon /></button>
        <button type="button" aria-label="Aide" className={clsx(cell, 'w-11')}><QuestionIcon /></button>
        <button type="button" aria-label="Déconnexion" className={clsx(cell, 'w-[45px]')}><PowerIcon /></button>
      </div>
    </div>
    <div className="border-b-4 border-[#3a7fc8] bg-linear-to-b from-[#b8b8b8] via-[#efefef] via-45% to-white">
      <div className="mx-auto h-[37px] max-w-[1237px] pt-[2px] pl-[206px]">
        <nav className="flex h-[31px] w-fit items-center rounded-[5px] bg-linear-to-b from-[#ededed] to-[#f8f8f8] text-[13px] text-[#666] shadow-[0_1px_2px_rgba(0,0,0,0.35)]">
          <a href="#" aria-label="Accueil" className="pr-2 pl-[10px]"><CrumbHomeIcon /></a>
          <CrumbSeparator />
          <a href="#" className="px-[11px]">Interventions</a>
          <CrumbSeparator />
          <a href="#" className="pr-[17px] pl-[11px]">Détail d'une intervention</a>
        </nav>
      </div>
    </div>
    <div className="pointer-events-none absolute inset-x-0 top-0 mx-auto max-w-[1237px] pl-[37px]"><CarlLogo /></div>
  </div>
);

const tabs = ['Général', 'Origine', 'Opérations', 'Fourniture', 'Sous-traitance', "Main d'oeuvre", 'Association', 'Sécurité', 'Commentaire'];

const Tabs = () => {
  const [active, setActive] = useState('Général');
  return (
    <div role="tablist" className="mt-[15px] flex gap-[2px] pl-[13px]">
      {tabs.map(tab => (
        <button
          key={tab}
          type="button"
          role="tab"
          aria-selected={tab === active}
          onClick={() => setActive(tab)}
          className={clsx(
            'h-[33px] rounded-t-[3px] px-[13px] pb-[3px] text-[15px] font-bold [text-shadow:0_1px_0_#fff]',
            tab === active ? 'bg-[#f0f0f0] text-[#3d80cc]' : 'bg-linear-to-b from-[#e3e3e3] to-[#cdcdcd] text-[#858585]'
          )}
        >
          {tab}
        </button>
      ))}
    </div>
  );
};

const InterventionGroup = () => (
  <Group title="Intervention" titleClass="pl-2" className="pb-[31px]">
    <DateField id="debut" label="Date de début" date="29/06/2020" time="10:59" />
    <DateField id="fin" label="Date de fin" date="29/06/2020" time="18:00" />
    <Field id="fixee" label="Date fixée"><CheckBox id="fixee" /></Field>
    <Field id="etat" label="Etat"><ReadOnly id="etat" value="En préparation" className="w-[189px]" /></Field>
    <Field id="priorite" label="Priorité" required>
      <SelectBox id="priorite" className="w-[182px]" options={['1 jour', '1 semaine', '1 mois']} />
    </Field>
    <Field id="nature" label="Nature" required><Lookup id="nature" value="MAINT-CORR" name="nature" /></Field>
    <Field id="cout" label="Centre de coût" required><Lookup id="cout" value="1091" name="centre de coût" /></Field>
    <Field id="symptome" label="Symptôme"><Lookup id="symptome" name="symptôme" /></Field>
    <Field id="panne" label="Matériel en panne"><CheckBox id="panne" /></Field>
    <Field id="travaux" label="Réception des travaux"><CheckBox id="travaux" /></Field>
    <Field id="charge" label="Charge prévue"><TextInput id="charge" value="00:00" className="w-[65px] text-right" /></Field>
  </Group>
);

const rightLabel = 'w-[156px]';

type Described = { id: string; label: string; value?: string; text?: string; pin?: boolean };

const equipment: Described[] = [
  { id: 'point-geo', label: 'Point géographique', value: 'S08', text: 'TECH - Chaufferie (149EC), groupes électrogènes et Secours', pin: true },
  { id: 'point-principal', label: 'Point principal' },
  { id: 'materiel', label: 'Matériel' },
  { id: 'modele', label: 'Modèle' },
  { id: 'famille', label: 'Famille' },
];

const DescribedField = ({ id, label, value, text, pin }: Described) => (
  <Field id={id} label={label} labelClass={rightLabel}>
    <Lookup id={id} value={value} name={label} />
    <ReadOnly id={`${id}-desc`} value={text} label={`Description ${label}`} className="ml-1 flex-1" />
    <span className="w-[55px] shrink-0 pl-2">
      {pin && <button type="button" aria-label="Localiser"><PinIcon /></button>}
    </span>
  </Field>
);

const RightGroups = () => (
  <div className="flex flex-col gap-[2px]">
    <Group title="Equipement" titleClass="pl-[11px]" className="pb-[5px]">
      {equipment.map(e => <DescribedField key={e.id} {...e} />)}
    </Group>
    <Group title="Prestation" titleClass="pl-[11px]" className="pb-px">
      <Field id="prestataire" label="Prestataire" labelClass={rightLabel}><Lookup id="prestataire" value="AI" name="prestataire" /></Field>
      <DescribedField id="contrat" label="Contrat" />
    </Group>
    <Group title="Contexte" titleClass="pl-[11px]" className="flex-1">
      <div className="flex justify-between pr-[3px]">
        <div>
          <Field id="organisation" label="Organisation" labelClass={rightLabel}><Lookup id="organisation" name="organisation" /></Field>
          <Field id="responsable" label="Responsable" labelClass={rightLabel}><Lookup id="responsable" value="JMMANIFACIER" name="responsable" /></Field>
          <Field id="equipe" label="Equipe responsable" labelClass={rightLabel}><ReadOnly id="equipe" value="AT-AUTOMATISMES" /></Field>
        </div>
        <div>
          <Field id="garantie" label="Garantie" labelClass="w-[100px]"><Lookup id="garantie" name="garantie" /></Field>
          <Field id="hors" label="Hors garantie" labelClass="w-[100px]"><CheckBox id="hors" gray /></Field>
        </div>
      </div>
    </Group>
  </div>
);

const AsbestosBar = () => (
  <div className="mt-[9px] flex h-[51px] items-center border border-[#bcbcbc] pr-[15px]">
    <label htmlFor="amiante" className="w-[185px] pl-2 text-[15px] font-bold text-[#dd0a12]">Etat d'amiante du local</label>
    <ReadOnly id="amiante" value="POSITIF" />
    <span className="ml-[17px]"><AsbestosIcon /></span>
    <label htmlFor="certifie" className="ml-auto w-[316px] text-[15px] leading-[18px] font-bold text-[#dd0a12]">
      Je certifie avoir pris connaissance du(des)<br />rapport(s) amiante de cette localisation
    </label>
    <div className="flex h-8 items-start">
      <span className="flex w-[14px] pl-[5px]"><Required /></span>
      <SelectBox id="certifie" className="w-[74px]" options={['Oui', 'Non']} />
    </div>
  </div>
);

const InterventionPanel = () => (
  <main className="mx-auto w-full max-w-[1237px] rounded-[6px] bg-linear-to-b from-white from-[20px] to-[#dcdcdc] to-[60px] px-[6px] pt-[7px] pb-[9px]">
    <div className="flex h-[44px] gap-1">
      <h1 className="h-[43px] flex-1 rounded-[4px] bg-linear-to-b from-[#6e6e6e] to-[#828282] pl-[17px] text-[17px] leading-[46px] font-bold text-white">
        Détail de l'intervention 101625 - Installation PC Vue
      </h1>
      <button type="button" aria-label="Retour" className="flex w-[57px] items-center justify-center rounded-[3px] bg-[#4a4a4a]"><BackIcon /></button>
      <button type="button" aria-label="Valider" className="flex w-[59px] items-center justify-center rounded-[3px] bg-[#4a4a4a]"><ValidateIcon /></button>
    </div>
    <div className="mt-1 flex h-[44px] items-center pl-px">
      <div className="flex gap-1">
        <ToolButton name="Enregistrer"><SaveIcon /></ToolButton>
        <ToolButton name="Nouveau"><AddDocIcon /></ToolButton>
        <ToolButton name="Workflow"><WorkflowIcon /></ToolButton>
      </div>
      <div className="ml-[111px] flex gap-1">
        <ToolButton name="Dupliquer"><CopiesIcon /></ToolButton>
        <ToolButton name="Documents"><AttachIcon /></ToolButton>
        <ToolButton name="Imprimer"><PrintIcon /></ToolButton>
        <ToolButton name="Statistiques"><ChartIcon /></ToolButton>
        <ToolButton name="Rafraîchir"><RefreshIcon /></ToolButton>
      </div>
      <div className="ml-[9px] flex gap-1">
        <ToolButton name="Fiche précédente"><PrevIcon /></ToolButton>
        <ToolButton name="Fiche suivante"><NextIcon /></ToolButton>
      </div>
      <div className="relative ml-[18px] h-[45px] flex-1 rounded-[3px] border border-dotted border-[#b5b5b5] bg-white pl-[5px] text-[15px] leading-[21px] text-[#4a4a4a]">
        <p>
          Une <b className="text-[#3d80cc]">intervention</b> est un ensemble d'opérations à effectuer sur un équipement du parc.
        </p>
        <a href="#" className="absolute right-[2px] bottom-[2px] text-[#3d80cc]">...</a>
      </div>
      <button type="button" aria-label="Aide" className="ml-1 flex h-[45px] w-[21px] flex-col items-center justify-between rounded-[4px] bg-[#3686dd] pb-[5px] text-[21px] leading-[29px] font-bold text-white">
        ?
        <svg className="h-[10px] w-[10px]" viewBox="0 0 10 10"><circle cx="5" cy="5" r="5" fill="#fff" /><path d="M2.500 5h5" stroke="#3686dd" strokeWidth="2" /></svg>
      </button>
    </div>
    <Tabs />
    <div className="bg-[#f0f0f0]">
      <div className="h-2 border-b border-white" />
      <form className="px-1 pt-1">
        <div className="flex h-[31px] pl-px">
          <Field id="numero" label="Intervention" required><TextInput id="numero" value="101625" /></Field>
          <div className="flex flex-1 pr-[45px] [&>div]:flex-1">
            <Field id="titre" label="Titre" labelClass="w-[134px] mr-4" required>
              <TextInput id="titre" value="Installation PC Vue" className="flex-1" />
            </Field>
          </div>
        </div>
        <div className="grid grid-cols-[1fr_2fr] gap-[5px]">
          <InterventionGroup />
          <RightGroups />
        </div>
        <AsbestosBar />
        <div className="mt-2 mr-[3px] flex border border-[#bcbcbc] pt-[10px] pr-[67px] pb-[18px]">
          <label htmlFor="commentaire" className="w-[163px] text-right text-[15px] leading-[24px] text-[#4a4a4a]">Commentaire</label>
          <div className="ml-[22px] flex-1">
            <EditorToolbar />
            <textarea id="commentaire" className="block h-[135px] w-full resize-none border border-t-0 border-[#d8d8d8] bg-white p-2 text-sm outline-none" />
          </div>
        </div>
      </form>
    </div>
  </main>
);

const ScrollBar = () => (
  <div className="flex w-[21px] shrink-0 flex-col border-l border-[#8d8d8d] bg-white">
    <div className="flex h-[22px] items-center justify-center border-b border-[#a0a0a0]"><Chevron className="rotate-180" /></div>
    <div className="flex flex-1 items-center justify-center bg-[#dcdcdc]">
      <svg className="h-[9px] w-[9px]" viewBox="0 0 9 9" stroke="#555"><path d="M0 1.500h9M0 4.500h9M0 7.500h9" /></svg>
    </div>
    <div className="h-[13px] border-y border-[#a0a0a0]" />
    <div className="flex h-[19px] items-center justify-center"><Chevron /></div>
  </div>
);

const TaskBar = () => (
  <footer className="flex h-12 items-stretch border-y border-[#3d6b74] bg-[#66caea] font-['Noto_Sans',sans-serif]">
    <button type="button" aria-label="Démarrer" className="flex w-[62px] items-center justify-center border-r border-[#35646f] bg-[#76cfec]">
      <svg className="h-[34px] w-[33px]" viewBox="0 0 33 34" fill="#fff">
        <path d="M0 5l14.500-2.500V16H0zM15.700 2.300L33 0v16H15.700zM0 17.200h14.500v13.500L0 28.500zM15.700 17.200H33V34l-17.300-3z" />
      </svg>
    </button>
    <button type="button" aria-label="Gestionnaire" className="flex w-[71px] items-center justify-center border-r border-[#35646f] bg-[#76cfec]">
      <svg className="h-[37px] w-[38px]" viewBox="0 0 38 37">
        <defs>
          <linearGradient id="app" x1="0" y1="0" x2="0" y2="1"><stop offset="0" stopColor="#7d8fbc" /><stop offset="0.500" stopColor="#33408c" /><stop offset="1" stopColor="#5766a8" /></linearGradient>
        </defs>
        <rect width="38" height="37" rx="3" fill="url(#app)" />
        <path d="M7 7l11-2v24H7z" fill="none" stroke="#fff" strokeWidth="1.600" />
        <path d="M10 10h7M10 13.500h7M10 17h6M10 20.500h6" stroke="#fff" strokeWidth="2" strokeDasharray="2 1" />
        <circle cx="22.500" cy="14" r="4" fill="#fff" />
        <path d="M16 29v-7c0-5 13-5 13 0v7z" fill="#fff" />
      </svg>
    </button>
    <button type="button" aria-label="Firefox" className="ml-[2px] flex w-[72px] items-center justify-center border-x border-[#2c4a52] bg-[#a0def2]">
      <svg className="h-[37px] w-[38px]" viewBox="0 0 38 37">
        <defs>
          <linearGradient id="fox" x1="1" y1="0" x2="0" y2="1"><stop offset="0" stopColor="#ffe226" /><stop offset="0.500" stopColor="#ff8a16" /><stop offset="1" stopColor="#f5156c" /></linearGradient>
        </defs>
        <circle cx="20" cy="17" r="14" fill="#1a5fd0" />
        <path d="M4 4c1 2 3 3 4 4 3-1 6 0 8 1l2-3c-1 4 1 6 4 6-1 3-5 3-5 5 0 3 4 3 7 2-2 4-7 5-10 3 3 6 13 5 15-3 1-6-4-9-5-14 0-3 2-5 4-5 0 4 10 7 10 19a18.500 18.500 0 0 1-37 0C1 12 2 8 4 4z" fill="url(#fox)" />
        <path d="M26 0c-4 5-1 8 1 11 3 5 2 10 0 14 5-2 8-6 8-12 0-5-7-8-9-13z" fill="#ffd91f" />
      </svg>
    </button>
    <span className="ml-auto self-center pr-[18px] text-[14px] text-[#12303a]">FRA</span>
  </footer>
);

const App = () => (
  <div className="flex min-h-screen flex-col bg-[#b5b5b5] font-['Liberation_Sans',Arial,sans-serif]">
    <BrowserChrome />
    <div className="relative flex flex-1">
      <div className="flex-1">
        <AppHeader />
        <div className="bg-[radial-gradient(ellipse_600px_8px_at_50%_0,#666,transparent),radial-gradient(ellipse_560px_9px_at_50%_100%,#555,transparent)] pt-[9px] pb-[9px]">
          <InterventionPanel />
        </div>
      </div>
      <ScrollBar />
      <div className="absolute bottom-0 left-0 h-[26px] border-t border-r border-[#d0d0d0] bg-[#f9f9fb] pr-[10px] pl-[5px] font-['Noto_Sans',sans-serif] text-[14px] leading-[26px] text-[#444]">
        gmaoproduction/gmaoCS02/works/WO-SEL.faces#
      </div>
    </div>
    <TaskBar />
  </div>
);

export default App;
